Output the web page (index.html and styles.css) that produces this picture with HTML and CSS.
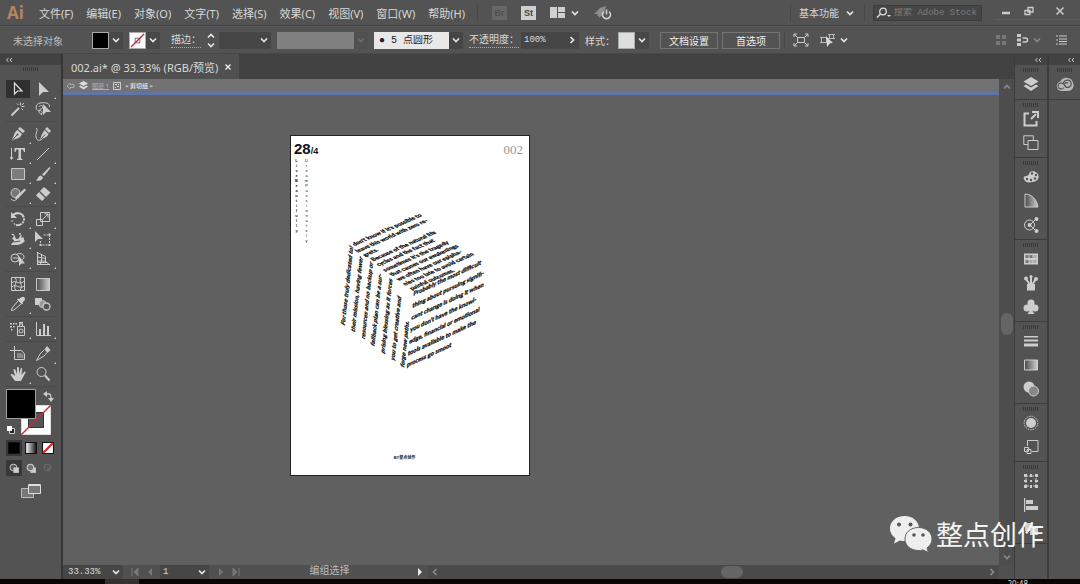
FILE: index.html
```html
<!DOCTYPE html>
<html lang="zh-CN">
<head>
<meta charset="utf-8">
<meta name="viewport" content="width=device-width, initial-scale=1">
<title>002.ai</title>
<link rel="stylesheet" href="styles.css">
</head>
<body>
<svg class="defs" aria-hidden="true">
  <defs>
    <symbol id="chev" viewBox="0 0 10 10"><path d="M2 3.5l3 3 3-3" fill="none" stroke="currentColor" stroke-width="1.7"/></symbol>
    <symbol id="collapse" viewBox="0 0 8 8"><path d="M3.5 2L1.500 4l2 2M7 2L5 4l2 2" fill="none" stroke="currentColor"/></symbol>
    <symbol id="grip" viewBox="0 0 16 4"><path d="M0 2h16" stroke="#3a3a3a" stroke-width="4" stroke-dasharray="1 1"/></symbol>
    <linearGradient id="fade"><stop offset="0" stop-color="#4a4a4a"/><stop offset="1" stop-color="#d0d0d0"/></linearGradient>
    <linearGradient id="fadeOut"><stop offset="0" stop-color="#fff"/><stop offset="1" stop-color="#111"/></linearGradient>
  </defs>
</svg>

<header class="menubar">
  <span class="logo">Ai</span>
  <nav class="menus">
    <button>文件(F)</button><button>编辑(E)</button><button>对象(O)</button><button>文字(T)</button><button>选择(S)</button><button>效果(C)</button><button>视图(V)</button><button>窗口(W)</button><button>帮助(H)</button>
  </nav>
  <i class="rule"></i>
  <div class="apps">
    <button class="app app-off">Br</button>
    <button class="app">St</button>
    <button class="layout-pick" aria-label="排列文档">
      <svg width="15" height="11" viewBox="0 0 15 11"><path d="M0 0h7v11H0zM8 0h7v5H8zM8 6h7v5H8z" fill="#cfcfcf"/></svg>
      <svg class="chev"><use href="#chev"/></svg>
    </button>
    <button class="rocket" aria-label="GPU 预览">
      <svg width="18" height="16" viewBox="0 0 18 16"><path d="M0 9L6 3l6-2-1 4-5 6-2 0-1-2z" fill="#8c8c8c"/><path d="M5 12l5-6" stroke="#8c8c8c" stroke-width="2"/><path d="M10 6.500a4 4 0 1 0 5 0M12.500 4.500v5" fill="none" stroke="#cfcfcf" stroke-width="1.600"/></svg>
    </button>
  </div>
  <div class="right-tools">
    <i class="rule"></i>
    <button class="workspace">基本功能<svg class="chev"><use href="#chev"/></svg></button>
    <i class="rule"></i>
    <label class="search">
      <svg width="16" height="12" viewBox="0 0 16 12"><circle cx="7" cy="4.500" r="3.300" fill="none" stroke="#ddd" stroke-width="1.300"/><path d="M4.500 7L1 10.500" stroke="#ddd" stroke-width="1.500"/><path d="M11 8h4l-2 2z" fill="#ddd"/></svg>
      <input type="text" placeholder="搜索 Adobe Stock" aria-label="搜索 Adobe Stock">
    </label>
    <div class="window-buttons">
      <button aria-label="最小化"><svg width="10" height="10"><path d="M1 7h8" stroke="#ccc" stroke-width="2.500"/></svg></button>
      <button aria-label="还原"><svg width="10" height="10"><path d="M4 1.500h5v4.500H4zM1 4.500h5v4H1z" fill="none" stroke="#ccc" stroke-width="1.300"/></svg></button>
      <button class="close" aria-label="关闭"><svg width="10" height="10"><path d="M1.500 1.500l7 7m0-7l-7 7" stroke="#ccc" stroke-width="1.500"/></svg></button>
    </div>
  </div>
</header>

<section class="controls" aria-label="控制">
  <span class="selection">未选择对象</span>
  <button class="swatch-pick" aria-label="填色"><i class="swatch black"></i><span class="drop"><svg class="chev"><use href="#chev"/></svg></span></button>
  <button class="swatch-pick" aria-label="描边颜色"><svg class="swatch" viewBox="0 0 16 16"><path d="M0 0h16v16H0z" fill="#fff"/><path d="M5.500 5.500h5v5h-5z" fill="none" stroke="#666"/><path d="M1 15L15 1" stroke="#c8283c" stroke-width="1.400"/></svg><span class="drop"><svg class="chev"><use href="#chev"/></svg></span></button>
  <label class="caption dotted stroke-caption" for="weight">描边：</label>
  <div class="stepper">
    <button aria-label="增加"><svg class="chev up"><use href="#chev"/></svg></button>
    <button aria-label="减少"><svg class="chev"><use href="#chev"/></svg></button>
  </div>
  <span class="pick weight"><select id="weight"><option></option></select><svg class="chev"><use href="#chev"/></svg></span>
  <span class="pick profile"><select disabled aria-label="变量宽度配置文件"><option></option></select><svg class="chev"><use href="#chev"/></svg></span>
  <span class="pick brush"><select aria-label="画笔定义"><option>● 5 点圆形</option></select><svg class="chev"><use href="#chev"/></svg></span>
  <label class="caption dotted" for="opacity">不透明度：</label>
  <span class="pick opacity"><input id="opacity" value="100%"><svg class="chev side"><use href="#chev"/></svg></span>
  <span class="caption">样式：</span>
  <button class="swatch-pick style-pick" aria-label="图形样式"><i class="swatch pale"></i><span class="drop"><svg class="chev"><use href="#chev"/></svg></span></button>
  <button class="boxed">文档设置</button>
  <button class="boxed">首选项</button>
  <i class="rule"></i>
  <button class="plain" aria-label="隔离选中的对象"><svg width="16" height="14" viewBox="0 0 16 14"><path d="M4.500 4.500h7v5h-7z" fill="none" stroke="#ccc"/><path d="M1 4V1h3M12 1h3v3M15 10v3h-3M4 13H1v-3M1 1l3.500 3.500M15 1l-3.500 3.500M15 13l-3.500-3.500M1 13l3.500-3.500" fill="none" stroke="#ccc"/></svg></button>
  <button class="plain pair" aria-label="选择类似的对象"><svg width="16" height="14" viewBox="0 0 16 14"><path d="M1.500 4.500h5v5h-5zM9.500 1.500h4v4h-4zM0 4.500h2M0 9.500h2M8 1.500h7M8 5.500h7" fill="none" stroke="#bbb"/><path d="M6 3l7 7-3 .3L7 14z" fill="#d8d8d8"/></svg><svg class="chev"><use href="#chev"/></svg></button>
  <div class="controls-end">
    <button class="plain" aria-label="网格"><svg width="10" height="10"><path d="M0 0h4v4H0zM6 0h4v4H6zM0 6h4v4H0zM6 6h4v4H6z" fill="#777"/></svg></button>
    <button class="plain pair" aria-label="对齐像素"><svg width="12" height="12"><path d="M0 0h4v3H0zM0 4.500h4v3H0zM0 9h4v3H0z" fill="#ccc"/><path d="M5.500 4h3a2 2 0 0 1 0 4h-3" fill="none" stroke="#ccc" stroke-width="1.500"/></svg><svg class="chev faint"><use href="#chev"/></svg></button>
    <button class="plain" aria-label="面板菜单"><svg width="11" height="10"><path d="M0 1h2M0 5h2M0 9h2M3 1h8M3 4h8M3 6.500h8M3 9h8" stroke="#ccc"/></svg></button>
  </div>
</section>

<main class="work">
  <aside class="tools">
    <div class="panel-head left"><svg class="collapse"><use href="#collapse"/></svg></div>
    <svg class="grip"><use href="#grip"/></svg>
    <div class="tool-group">
      <button class="tool on" aria-label="选择"><svg viewBox="0 0 16 16"><path d="M4.500 2v11l3-3h4.500z" fill="none" stroke="#ddd" stroke-width="1.200"/></svg></button>
      <button class="tool more" aria-label="直接选择"><svg viewBox="0 0 16 16"><path d="M4 1v14l4-4h6z"/></svg></button>
      <button class="tool" aria-label="魔棒"><svg viewBox="0 0 16 16"><path class="l2" d="M1.500 14.500L9 7"/><path class="l" d="M10.500 1.500v3M14.500 5.500h-3M12 4l2-2M7 2.500l1.500 1.500M13 9l-1.500-1.500"/></svg></button>
      <button class="tool" aria-label="套索"><svg viewBox="0 0 16 16"><path class="l" d="M4 10C0 9 0 3 5 2s10 0 9.500 4M4 6c1-2 4-2 4 0s-4 2-4 4 1 3 3 3M5 9c2 1 3 3 1 5"/><path d="M8 3v11l3-3H16z"/></svg></button>
    </div>
    <div class="tool-group">
      <button class="tool more" aria-label="钢笔"><svg viewBox="0 0 16 16"><path d="M10 1l5 4-2 2-5-4zM7.500 4l4.500 4c-1 3-4 5-8 5.500L1.500 15 4 9c.5-2 1.500-4 3.500-5z"/><path d="M2 14.500L7 9" stroke="#535353"/><circle cx="7.500" cy="8.500" r="1" fill="#535353"/></svg></button>
      <button class="tool" aria-label="曲率"><svg viewBox="0 0 16 16"><path d="M12 1l4 4-2 2-4-4zM9.500 4l4 4c-1 3-4 4-7 5L5 14l1.500-5z"/><path d="M6 13l4-4.500" stroke="#535353"/><path class="l" d="M1 2c3 2-1 5 0 9s4 4 6 2"/></svg></button>
      <button class="tool more" aria-label="文字"><svg viewBox="0 0 16 16"><path class="l" d="M1.500 2v11M0 11l1.500 2.500L3 11"/><path d="M4.500 2H15v4h-1l-1-2.500h-2v9l1.500.5v1H7v-1l1.500-.5v-9h-2L5.500 6h-1z"/></svg></button>
      <button class="tool more" aria-label="直线段"><svg viewBox="0 0 16 16"><path class="l" d="M2 14L14 2"/></svg></button>
      <button class="tool more" aria-label="矩形"><svg viewBox="0 0 16 16"><path d="M1.500 2.500h13v11h-13z" fill="#7c7c7c" stroke="#c8c8c8"/></svg></button>
      <button class="tool more" aria-label="画笔"><svg viewBox="0 0 16 16"><path d="M14.500 1L15.500 2 9 10 7 8.500zM6 9.500l2 2C7 15 4 15 1 14.500c2-1 2-5 5-5z"/></svg></button>
      <button class="tool more" aria-label="Shaper"><svg viewBox="0 0 16 16"><circle cx="5.500" cy="7" r="4.500" fill="#777" stroke="#c8c8c8"/><path d="M14.500 2.500l1.500 1.500-8 8.500-3 1 1-3z"/><path class="l" d="M1 13c2 2 4 2 6 0"/></svg></button>
      <button class="tool more" aria-label="橡皮擦"><svg viewBox="0 0 16 16"><path d="M9 1l6.500 5.500-4.500 4.500-6-6zM4 6l6 6-3 3L1 9.500z"/></svg></button>
    </div>
    <div class="tool-group">
      <button class="tool more" aria-label="旋转"><svg viewBox="0 0 16 16"><path class="l2" d="M3 4c5-4 11-1 11 4 0 4-4 7-8 6" stroke-dasharray="13 1 2 1 2 1"/><path d="M1 1v6h6z"/><path class="l" d="M2 9v2M4 12l1 2"/></svg></button>
      <button class="tool more" aria-label="缩放"><svg viewBox="0 0 16 16"><path class="l" d="M5.500 1.500h9v9h-9zM1.500 8.500h6v6h-6z"/><path class="l" d="M8 8l5-5M9.500 3H13v3.500"/></svg></button>
      <button class="tool more" aria-label="宽度"><svg viewBox="0 0 16 16"><path d="M1 3c5-2 3 6 7 5 2-1 1-4 4-4l-1 3c3-2 3 0 3 2l1 1c-5 5-9 4-14 4l1-2c2-1 2-1 2-3L2 8l2-3z"/><path d="M4 11l6-1" stroke="#535353"/><circle cx="10" cy="3" r="1"/></svg></button>
      <button class="tool" aria-label="自由变换"><svg viewBox="0 0 16 16"><path d="M0 0v11l3-3h5z"/><path class="l" d="M5.500 10v4h9v-10h-6" stroke-dasharray="2 1"/><path d="M13.500 2.500h2v2h-2zM13.500 13h2v2h-2zM4.500 13h2v2h-2z"/></svg></button>
      <button class="tool more" aria-label="形状生成器"><svg viewBox="0 0 16 16"><circle class="l" cx="5" cy="7" r="4"/><path class="l" d="M6 4c3-3 8-1 8 2s-4 4-7 4M3 7h6" /><path d="M9 5v10l2.500-2.500H15z"/></svg></button>
      <button class="tool more" aria-label="透视网格"><svg viewBox="0 0 16 16"><path class="l" d="M2.500 1v13M2.500 1.500l8 4v5M6.500 3.500v8M2.500 6l8 1.500M2.500 10h8M2 13.500h13M2 11.500l10 0M10 10l5 4M7 11l-3 3"/></svg></button>
    </div>
    <div class="tool-group">
      <button class="tool" aria-label="网格"><svg viewBox="0 0 16 16"><path class="l" d="M1.500 1.500h13v13h-13zM1.500 7c4-4 7 3 13-2M1.500 11c5-4 8 3 13-1M5 1.500c4 4-3 8 1 13M11 1.500c-3 4 3 8-1 13"/></svg></button>
      <button class="tool" aria-label="渐变"><svg viewBox="0 0 16 16"><path d="M1.500 2.500h13v12h-13z" fill="url(#fade)" stroke="#c8c8c8"/></svg></button>
      <button class="tool more" aria-label="吸管"><svg viewBox="0 0 16 16"><path d="M11 1.500c3-2 5 1 3.500 3l-2 2 .5 1-1 1-5-5 1-1 1 .5z"/><path class="l" d="M8 5l-6 7-.5 2.500L4 14l7-6"/></svg></button>
      <button class="tool" aria-label="混合"><svg viewBox="0 0 16 16"><path d="M0 2h7v7H0z"/><circle cx="7.500" cy="8" r="3.500" fill="#999" stroke="#c8c8c8"/><circle cx="11.500" cy="10.500" r="3.500" fill="#535353" stroke="#c8c8c8" stroke-width="1.300"/></svg></button>
    </div>
    <div class="tool-group">
      <button class="tool more" aria-label="符号喷枪"><svg viewBox="0 0 16 16"><path class="l" d="M7.500 5.500h7v9h-7zM9.500 5V3h3v2"/><circle class="l" cx="11" cy="10" r="2"/><path d="M9 1h4v1.500H9zM0 2h2v1.500H0zM3 2h1.500v1.500H3zM5.500 2H7v1.500H5.500zM0 5h2v1.500H0zM3 5h1.500v1.500H3zM1 8h1.500v1.500H1z"/></svg></button>
      <button class="tool more" aria-label="柱形图"><svg viewBox="0 0 16 16"><path class="l" d="M1.500 1v13.500H16"/><path d="M4 8h2v6H4zM8 3h2v11H8zM12 5h2v9h-2z"/></svg></button>
    </div>
    <div class="tool-group">
      <button class="tool" aria-label="画板"><svg viewBox="0 0 16 16"><path class="l" d="M4.500 0v5M0 4.500h6M4.500 4.500v9h10V8l-3-3.500z"/><path d="M7 7h4l2.500 2v3H7z" fill="#888"/></svg></button>
      <button class="tool more" aria-label="切片"><svg viewBox="0 0 16 16"><path d="M12 0l3.500 4-3 3-3-3.500z"/><path class="l" d="M9 4L5 8 1.500 14.500 9 10l3-3.500"/></svg></button>
      <button class="tool more" aria-label="抓手"><svg viewBox="0 0 16 16"><path d="M5 15L1 9.500c-1-1.500 1-2 2-1L5 10 3.500 4c0-1.500 1.500-1.500 2 0L7 8V2c0-1.500 2-1.500 2 0v6l1.500-5c.5-1.500 2-1 1.700.5L11.500 9 14 6c1-1 2 0 1.300 1L11 15z"/></svg></button>
      <button class="tool" aria-label="缩放显示"><svg viewBox="0 0 16 16"><circle class="l" cx="6.500" cy="6" r="4.500"/><path class="l2" d="M10 9.500l4.500 5"/></svg></button>
    </div>
    <svg class="fill-stroke" viewBox="0 0 50 50" role="img" aria-label="填色和描边">
      <path d="M15.500 16.500h29v29h-29z" fill="#fff" stroke="#ddd"/><path d="M22.500 23.500h15v15h-15z" fill="#555" stroke="#333"/><path d="M15 46L45 16" stroke="#c8283c" stroke-width="1.500"/>
      <path d="M.500 .500h29v29H.500z" fill="#000" stroke="#a0a0a0"/>
      <path d="M39 5h4q2 0 2 5" fill="none" stroke="#ccc" stroke-width="1.300"/><path d="M37 5l4-3v6zM42 9h6l-3 4z" fill="#ccc"/>
      <path d="M3.500 39.500h5v5h-5z" fill="#222" stroke="#ccc"/><path d="M1 37h5v5H1z" fill="#fff"/>
    </svg>
    <div class="modes">
      <button class="mode on" aria-label="颜色"><svg viewBox="0 0 11 11"><path d="M.500 .500h10v10H.500z" stroke="#111"/></svg></button>
      <button class="mode" aria-label="渐变"><svg viewBox="0 0 11 11"><path d="M.500 .500h10v10H.500z" fill="url(#fadeOut)" stroke="#111"/></svg></button>
      <button class="mode" aria-label="无"><svg viewBox="0 0 11 11"><path d="M.500 .500h10v10H.500z" fill="#fff" stroke="#111"/><path d="M1 10L10 1" stroke="#d22" stroke-width="2"/></svg></button>
    </div>
    <div class="modes">
      <button class="mode on" aria-label="正常绘图"><svg viewBox="0 0 11 11"><circle cx="5" cy="5" r="3" fill="#555" stroke="#bbb"/><path d="M5 5h5v5H5z" fill="#ccc"/></svg></button>
      <button class="mode" aria-label="背面绘图"><svg viewBox="0 0 11 11"><path d="M5 5h5v5H5z" fill="#ccc"/><circle cx="5" cy="5" r="3" fill="#777" stroke="#ccc"/></svg></button>
      <button class="mode" aria-label="内部绘图"><svg viewBox="0 0 11 11"><circle cx="5" cy="5" r="3" fill="none" stroke="#6c6c6c"/><path d="M5 5h2v2H5z" fill="#6c6c6c"/></svg></button>
    </div>
    <button class="screen-mode" aria-label="更改屏幕模式"><svg width="20" height="14"><path d="M.500 4.500h12v9H.500z" fill="#777" stroke="#bbb"/><path d="M7.500 .500h12v9h-12z" fill="#777" stroke="#ddd"/><path d="M8 1.500h11" stroke="#ddd"/></svg></button>
  </aside>

  <section class="document">
    <div class="tabs">
      <div class="tab"><span>002.ai* @ 33.33% (RGB/预览)</span><button aria-label="关闭文档"><svg width="6" height="6"><path d="M.500 .500l5 5m0-5l-5 5" stroke="#eee" stroke-width="1.300"/></svg></button></div>
    </div>
    <div class="view">
      <div class="stage">
        <nav class="crumbs">
          <svg width="9" height="8"><path d="M4 1L1 4l3 3V5.500h4v-3H4z" fill="none" stroke="#aaa"/></svg>
          <svg width="9" height="9"><path d="M4.500 0L9 2.500 4.500 5 0 2.500zM0 5.500l1.500-1 3 1.700 3-1.700 1.500 1L4.500 8.500z" fill="#ddd"/></svg>
          <a href="#">图层 1</a>
          <svg width="8" height="8"><path d="M.500 .500h7v7h-7z" fill="none" stroke="#ccc"/><path d="M2 2h2v1H2zM4 4h2v1H4zM2 5h1v1H2zM5 2h1v1H5z" fill="#ddd"/></svg>
          <b>&lt; 剪切组 &gt;</b>
        </nav>
        <div class="canvas">
          <article class="artboard">
            <header><h1>28<small>/4</small></h1><span class="number">002</span></header>
            <div class="motto"><strong><span>Live</span> <span>Beautifully</span></strong><p><span>Dream</span> <span>Passionately</span></p></div>
            <svg class="cube" viewBox="0 0 480 540">
              <g class="top-face">
                <text transform="matrix(.914 -.406 .8 .6 74 138)">don't know if it's possible to</text>
                <text transform="matrix(.914 -.406 .8 .6 84 158)">leave this world with zero re-</text>
                <text transform="matrix(.914 -.406 .8 .6 106 170)">grets.</text>
                <text transform="matrix(.914 -.406 .8 .6 130 184)">Because of the natural life</text>
                <text transform="matrix(.914 -.406 .8 .6 146 199)">cycles and the fact that</text>
                <text transform="matrix(.914 -.406 .8 .6 166 215)">sometimes it's the tragedy</text>
                <text transform="matrix(.914 -.406 .8 .6 186 229)">that causes our awakenings</text>
                <text transform="matrix(.914 -.406 .8 .6 206 243)">we often have our epipha-</text>
                <text transform="matrix(.914 -.406 .8 .6 226 257)">nies too late to avoid certain</text>
                <text transform="matrix(.914 -.406 .8 .6 246 271)">painful outcomes.</text>
              </g>
              <g class="side-face">
                <text transform="matrix(.107 -.994 .82 .57 44 378)">For those truly dedicated to!</text>
                <text transform="matrix(.107 -.994 .82 .57 74 398)">their mission, having fewer</text>
                <text transform="matrix(.107 -.994 .82 .57 104 419)">resources and no backup or</text>
                <text transform="matrix(.107 -.994 .82 .57 133 440)">fallback plan can be a sur-</text>
                <text transform="matrix(.107 -.994 .82 .57 163 462)">prising blessing as it forces</text>
                <text transform="matrix(.107 -.994 .82 .57 193 484)">you to get creative and</text>
                <text transform="matrix(.107 -.994 .82 .57 222 504)">forge new paths.</text>
              </g>
              <g class="side-face">
                <text transform="matrix(.907 -.421 -.09 .995 250 288)">Probably the most difficult</text>
                <text transform="matrix(.907 -.421 -.09 .995 247 324)">thing about pursuing signifi-</text>
                <text transform="matrix(.907 -.421 -.09 .995 244 360)">cant change is doing it when</text>
                <text transform="matrix(.907 -.421 -.09 .995 240 396)">you don't have the knowl-</text>
                <text transform="matrix(.907 -.421 -.09 .995 237 432)">edge, financial or emotional</text>
                <text transform="matrix(.907 -.421 -.09 .995 233 467)">tools available to make the</text>
                <text transform="matrix(.907 -.421 -.09 .995 230 502)">process go smoot</text>
              </g>
            </svg>
            <footer>BY整点创作</footer>
          </article>
        </div>
      </div>
      <div class="vscroll"><svg class="chev up faint"><use href="#chev"/></svg><i class="before"></i><i class="thumb"></i><i class="after"></i><svg class="chev faint"><use href="#chev"/></svg></div>
    </div>
    <footer class="status">
      <span class="pick zoom"><select aria-label="缩放级别"><option>33.33%</option></select><svg class="chev"><use href="#chev"/></svg></span>
      <div class="pager">
        <button aria-label="首项"><svg width="8" height="8"><path d="M1 0v8M7 0v8L3 4z" fill="#777" stroke="#777"/></svg></button>
        <button aria-label="上一项"><svg width="8" height="8"><path d="M6 0v8L2 4z" fill="#777"/></svg></button>
      </div>
      <span class="pick page"><select aria-label="画板导航"><option>1</option></select><svg class="chev"><use href="#chev"/></svg></span>
      <div class="pager">
        <button aria-label="下一项"><svg width="8" height="8"><path d="M2 0v8l4-4z" fill="#777"/></svg></button>
        <button aria-label="末项"><svg width="8" height="8"><path d="M7 0v8M1 0v8l4-4z" fill="#777" stroke="#777"/></svg></button>
      </div>
      <span class="state">编组选择</span>
      <button class="play" aria-label="状态栏菜单"><svg width="6" height="8"><path d="M1 0v8l4-4z" fill="#eee"/></svg></button>
      <div class="hscroll"><svg class="chev back faint"><use href="#chev"/></svg><i class="before"></i><i class="thumb"></i><i class="after"></i><svg class="chev side faint"><use href="#chev"/></svg></div>
      <i class="corner"></i>
    </footer>
  </section>

  <aside class="dock">
    <div class="panel-head"><svg class="collapse"><use href="#collapse"/></svg></div>
    <div class="dock-group first"><svg class="grip"><use href="#grip"/></svg>
      <button aria-label="图层"><svg viewBox="0 0 16 16"><path d="M8 1l7.500 4.500L8 10 .500 5.500zM.500 10L3 8.500l5 3 5-3 2.500 1.500L8 15z"/></svg></button>
    </div>
    <div class="dock-group"><svg class="grip"><use href="#grip"/></svg>
      <button aria-label="资源导出"><svg viewBox="0 0 16 16"><path class="l2" d="M6 2.500H1.500v12h12V10M8 8l5-5"/><path d="M9 0h7v7h-2V2H9z"/></svg></button>
      <button aria-label="画板"><svg viewBox="0 0 16 16"><path class="l" d="M5 9.500H.800V.800h9.500V5M5 5.500h10v9H5z"/></svg></button>
    </div>
    <div class="dock-group"><svg class="grip"><use href="#grip"/></svg>
      <button aria-label="颜色"><svg viewBox="0 0 16 16"><path d="M1 10c-2-4 5-2 5-5s5-4 8-1 2 8-4 9-8 0-9-3z"/><g fill="#535353"><circle cx="9" cy="4.500" r="1.200"/><circle cx="13" cy="6" r="1.200"/><circle cx="12" cy="9.500" r="1.200"/><circle cx="8" cy="11" r="1.200"/><circle cx="4" cy="10" r="1.200"/></g></svg></button>
      <button aria-label="颜色参考"><svg viewBox="0 0 16 16"><path d="M2 1c7 0 12 6 13 13H2z" fill="url(#fade)" stroke="#ccc"/></svg></button>
      <button aria-label="颜色主题"><svg viewBox="0 0 16 16"><circle class="l" cx="6.500" cy="8" r="5" stroke-width="1.500"/><circle cx="6.500" cy="8" r="2"/><path class="l" d="M7 8l6-6M7 8l6 6"/><circle cx="13.500" cy="2" r="2"/><circle cx="13.500" cy="14" r="2"/></svg></button>
    </div>
    <div class="dock-group"><svg class="grip"><use href="#grip"/></svg>
      <button aria-label="色板"><svg viewBox="0 0 16 16"><path d="M1 2.500h14v11H1z"/><path d="M2.500 4h3v3h-3zM6.500 4h3v3h-3zM2.500 9h3v3h-3z" fill="#777"/><path d="M10.500 4h3v3h-3zM6.500 9h3v3h-3zM10.500 9h3v3h-3z" fill="#aaa"/></svg></button>
      <button aria-label="画笔"><svg viewBox="0 0 16 16"><path d="M4 9h8v6.500H4z"/><path class="l2" d="M6.500 9L3 4M8 9V2M9.500 9L13 4"/><circle cx="3" cy="3.500" r="2"/><circle cx="8" cy="1.500" r="1.500"/><circle cx="13" cy="4" r="2"/></svg></button>
      <button aria-label="符号"><svg viewBox="0 0 16 16"><circle cx="8" cy="4" r="3.500"/><circle cx="4" cy="9" r="3.500"/><circle cx="12" cy="9" r="3.500"/><path d="M7 6h2l.5 6 2 3h-7l2-3z"/></svg></button>
    </div>
    <div class="dock-group"><svg class="grip"><use href="#grip"/></svg>
      <button aria-label="描边"><svg viewBox="0 0 16 16"><path d="M1 3h14v1.500H1zM1 6.500h14v2H1zM1 10.500h14v3H1z"/></svg></button>
      <button aria-label="渐变面板"><svg viewBox="0 0 16 16"><path d="M1.500 3h13v10h-13z" fill="url(#fade)" stroke="#ccc"/></svg></button>
      <button aria-label="透明度"><svg viewBox="0 0 16 16"><circle cx="6" cy="6" r="5.500"/><circle cx="10.500" cy="10" r="5" fill="#888" stroke="#d0d0d0"/></svg></button>
    </div>
    <div class="dock-group"><svg class="grip"><use href="#grip"/></svg>
      <button aria-label="外观"><svg viewBox="0 0 16 16"><circle cx="8" cy="8" r="5"/><circle cx="8" cy="8" r="6.800" fill="none" stroke="#ccc" stroke-dasharray="1.500 1"/></svg></button>
      <button aria-label="图形样式面板"><svg viewBox="0 0 16 16"><path class="l" d="M4.500 7V1.500h10.500v11H9"/><path class="l" d="M1.500 8.500h4v4h-4zM4 10.500h4v4H4z"/></svg></button>
    </div>
    <div class="dock-group"><svg class="grip"><use href="#grip"/></svg>
      <button aria-label="变换"><svg viewBox="0 0 16 16"><path class="l" d="M3 3h10v10H3z" stroke-dasharray="2 1"/><path d="M1 1h3v3H1zM12 1h3v3h-3zM1 12h3v3H1zM12 12h3v3h-3zM7 1h2v3H7zM7 12h2v3H7zM1 7h3v2H1zM12 7h3v2h-3zM7 7h2v2H7z"/></svg></button>
      <button aria-label="对齐"><svg viewBox="0 0 16 16"><path d="M1 1h1.200v14H1zM3 3h7v4H3zM3 9h12v4H3z"/></svg></button>
      <button aria-label="路径查找器"><svg viewBox="0 0 16 16"><path d="M2 2h8v4h5v8H7v-4H2z"/></svg></button>
    </div>
  </aside>
  <aside class="dock">
    <div class="panel-head"><svg class="collapse"><use href="#collapse"/></svg></div>
    <div class="dock-group first"><svg class="grip"><use href="#grip"/></svg>
      <button class="wide" aria-label="库"><svg viewBox="0 0 18 16"><path d="M5.500 15a5 5 0 0 1-1-9.800C6 2 9 1 12 2c3 .5 4.500 2.500 5 5 2 4-1 8-5 8z" fill="#b8b8b8"/><path d="M8 11.500c-2 2.500-6 1.500-6-1.500s4-4 6-1.500l2.500 3M7 8c1-5 7-5 8-1.500 1 4-3 6.500-6 3.500-2-2 1-4.500 3-2.500" fill="none" stroke="#555" stroke-width="1.200"/></svg></button>
    </div>
  </aside>
</main>

<div class="taskbar"><i class="running"></i><time>20:48</time></div>

<div class="watermark">
  <svg width="44" height="38" viewBox="0 0 44 38"><path d="M15.500 1C7 1 1 6.500 1 13.500c0 4 2 7.500 5.500 9.800L5 28.500l6-3c1.500.4 3 .5 4.500.5C24 26 30 20.500 30 13.500S24 1 15.500 1z" fill="#eee"/><path d="M29.500 12.500c-8 0-13.500 5-13.500 11.500S21.500 35.500 29.500 35.500c1.500 0 3-.2 4.500-.6l5.500 2.600-1.500-4.600c3-2 5-5 5-8.900 0-6.500-5.500-11.500-13.500-11.500z" fill="#eee" stroke="#606060"/><g fill="#555"><circle cx="10" cy="9.500" r="2"/><circle cx="21.500" cy="9.500" r="2"/><circle cx="25" cy="20" r="1.800"/><circle cx="34" cy="20" r="1.800"/></g></svg>
  <span>整点创作</span>
</div>
</body>
</html>
```
FILE: styles.css
```css
* { box-sizing: border-box; }
body {
  margin: 0;
  min-height: 100vh;
  display: flex;
  flex-direction: column;
  position: relative;
  background: #535353;
  color: #d8d8d8;
  font-family: "Noto Sans", "Noto Sans CJK SC", sans-serif;
  font-size: 11px;
}
button, input, select {
  margin: 0;
  padding: 0;
  border: 0;
  background: none;
  color: inherit;
  font: inherit;
  border-radius: 0;
}
select { appearance: none; opacity: 1; }
button {
  display: flex;
  align-items: center;
  justify-content: center;
  white-space: nowrap;
}
svg { display: block; flex: none; }
.defs { position: absolute; width: 0; height: 0; }
.chev { width: 10px; height: 10px; color: #e4e4e4; }
.up { transform: rotate(180deg); }
.side { transform: rotate(-90deg); }
.back { transform: rotate(90deg); }
.faint { color: #8a8a8a; }
.rule { width: 1px; height: 18px; background: #484848; }

/* Menu bar */
.menubar {
  display: flex;
  align-items: center;
  height: 26px;
  padding-left: 7px;
  border-bottom: 1px solid #404040;
}
.logo {
  width: 32px;
  color: #b58463;
  font: bold 17px/24px "Open Sans", sans-serif;
}
.menus { display: flex; gap: 13px; margin-right: 12px; }
.apps { display: flex; align-items: center; margin-left: 14px; gap: 14px; }
.app {
  width: 15px;
  height: 14px;
  background: #cfcfcf;
  color: #444;
  font: bold 9px "Liberation Sans", sans-serif;
}
.app-off { background: #676767; color: #4e4e4e; }
.layout-pick { gap: 5px; }
.right-tools { display: flex; align-items: center; margin-left: auto; }
.workspace { gap: 6px; margin: 0 9px 0 8px; font-size: 10px; }
.search {
  display: flex;
  align-items: center;
  gap: 2px;
  width: 109px;
  height: 16px;
  margin: 0 12px 0 8px;
  padding-left: 2px;
  background: #464646;
  border: 1px solid #3c3c3c;
}
.search input {
  flex: 1;
  min-width: 0;
  font: 9px "Liberation Mono", "Noto Sans CJK SC", monospace;
  outline: 0;
}
.search input::placeholder { color: #7c7c7c; opacity: 1; }
.window-buttons { display: flex; height: 16px; align-self: flex-start; border-bottom: 1px solid #5c5c5c; }
.window-buttons button { width: 23px; }
.window-buttons .close { width: 40px; }

/* Control bar */
.controls {
  display: flex;
  align-items: center;
  height: 28px;
  padding-left: 13px;
  border-top: 1px solid #5a5a5a;
  border-bottom: 1px solid #484848;
  font-family: "Liberation Mono", "Noto Sans CJK SC", monospace;
  font-size: 10px;
}
.selection { width: 79px; color: #bdbdbd; white-space: nowrap; }
.swatch-pick { margin-right: 6px; }
.swatch { width: 17px; height: 17px; border: 1px solid #aaa; }
.black { background: #000; }
.pale { background: #dedede; }
.drop {
  display: flex;
  align-items: center;
  justify-content: center;
  width: 14px;
  height: 17px;
  background: #484848;
}
.caption { white-space: nowrap; }
.dotted { padding-top: 2px; border-bottom: 1px dotted #aaa; line-height: 12px; }
.stroke-caption { margin-left: 5px; }
.stepper { width: 12px; margin: 0 2px 0 4px; }
.stepper button { width: 12px; height: 9px; }
.pick {
  display: flex;
  align-items: center;
  height: 17px;
  margin-right: 6px;
  padding-right: 2px;
  background: #464646;
}
.pick select, .pick input { flex: 1; min-width: 0; height: 100%; margin-right: 2px; }
.weight { width: 52px; }
.profile { width: 91px; background: #505050; }
.profile select { background: #808080; }
.profile .chev { color: #6c6c6c; }
.brush { width: 89px; }
.brush select { padding-left: 5px; background: #e8e8e8; color: #222; }
.opacity { width: 58px; margin-left: 2px; font-size: 9px; }
.opacity input { padding-left: 3px; }
.style-pick { margin: 0 11px 0 3px; }
.boxed {
  width: 58px;
  height: 17px;
  margin-right: 4px;
  border: 1px solid #747474;
  color: #eee;
}
.plain { margin-left: 8px; }
.pair { margin-left: 11px; gap: 3px; }
.controls-end { display: flex; align-items: center; margin: 0 13px 0 auto; }
.controls-end .plain:last-child { margin-left: 14px; }

/* Work area */
.work { flex: 1; display: flex; }
.panel-head {
  display: flex;
  align-items: center;
  justify-content: flex-end;
  align-self: stretch;
  height: 11px;
  padding: 0 5px;
  background: #424242;
}
.panel-head.left { justify-content: flex-start; }
.collapse { width: 8px; height: 8px; color: #ccc; }
.grip { width: 16px; height: 4px; }

.tools {
  display: flex;
  flex-direction: column;
  align-items: center;
  width: 63px;
  border-right: 2px solid #363636;
}
.tools > .grip { margin: 2px 0 8px; }
.tool-group {
  display: grid;
  grid-template-columns: 25px 25px;
  grid-auto-rows: 20px;
  padding-bottom: 2px;
  margin-bottom: 2px;
  border-bottom: 1px solid #4a4a4a;
}
.tool { position: relative; }
.tool svg, .dock-group button svg { width: 16px; height: 16px; fill: #cdcdcd; }
.tool.on { width: 24px; height: 18px; margin-top: 1px; background: #303030; }
.tool .l, .tool .l2, .dock .l, .dock .l2 { fill: none; stroke: #cdcdcd; stroke-width: 1; }
.tool .l2, .dock .l2 { stroke-width: 2; }
.more::after {
  content: "";
  position: absolute;
  right: 0;
  bottom: 0;
  border: 1px solid #ccc;
  border-top-color: transparent;
  border-left-color: transparent;
}
.fill-stroke { width: 50px; height: 50px; margin-bottom: 1px; }
.modes { display: flex; gap: 1px; margin-bottom: 4px; }
.mode { width: 16px; height: 16px; }
.mode.on { background: #383838; }
.mode svg { width: 12px; height: 12px; }
.screen-mode { margin-top: 4px; }

.document { flex: 1; min-width: 0; display: flex; flex-direction: column; }
.tabs { display: flex; height: 25px; background: #424242; }
.tab {
  display: flex;
  align-items: center;
  gap: 7px;
  padding: 0 8px;
  background: #505050;
  font-size: 11px;
  white-space: nowrap;
}
.view { flex: 1; display: flex; }
.stage { flex: 1; display: flex; flex-direction: column; background: #606060; }
.crumbs {
  display: flex;
  align-items: center;
  gap: 4px;
  height: 16px;
  padding-left: 3px;
  background: #727272;
  border-bottom: 3px solid #6076a8;
  color: #b8b8b8;
  font-size: 6px;
  line-height: 12px;
}
.crumbs a { color: #b0b0b0; }
.crumbs b { color: #ddd; }
.canvas { flex: 1; padding: 40px 227px; }

/* Poster */
.artboard {
  position: relative;
  display: flex;
  flex-direction: column;
  width: 240px;
  height: 341px;
  padding: 4px 6px 14px 3px;
  background: #fff;
  border: 1px solid #222;
  color: #111;
  font-family: "Liberation Sans", "Noto Sans CJK SC", sans-serif;
}
.artboard header { display: flex; justify-content: space-between; height: 18px; }
.artboard h1 { margin: 0; font-size: 15px; line-height: 18px; }
.artboard small { font-size: 9px; }
.number { color: #999; font: 13px/20px "Liberation Serif", serif; }
.motto {
  display: flex;
  gap: 5px;
  font-size: 4px;
  line-height: 5px;
}
.motto > * { display: flex; margin: 0; writing-mode: vertical-rl; text-orientation: upright; }
.cube { position: absolute; left: 39px; top: 64px; width: 160px; height: 180px; }
.cube text { font-family: Lato, sans-serif; font-weight: bold; fill: #111; stroke: #111; stroke-width: 1px; }
.top-face { font-size: 18px; }
.side-face { font-size: 19px; }
.artboard footer {
  margin-top: auto;
  padding-right: 8px;
  font-size: 4px;
  font-weight: bold;
  line-height: 6px;
  text-align: center;
}

/* Scroll bars and status */
.vscroll {
  display: flex;
  flex-direction: column;
  align-items: center;
  width: 15px;
  padding: 3px 0;
  background: #4d4d4d;
}
.vscroll .thumb { width: 12px; height: 22px; border-radius: 6px; background: #656565; }
.vscroll .before { flex: 52; }
.vscroll .after { flex: 51; }
.status {
  display: flex;
  align-items: center;
  height: 14px;
  background: #505050;
  font-family: "Liberation Mono", "Noto Sans CJK SC", monospace;
  font-size: 9px;
}
.status .pick { height: 14px; margin: 0; }
.zoom { width: 60px; padding-left: 5px; }
.page { width: 49px; padding-left: 3px; }
.pager { display: flex; gap: 7px; padding: 0 6px 0 8px; }
.state { width: 167px; text-align: center; font-size: 10px; line-height: 14px; color: #bbb; }
.play { width: 14px; margin-right: 1px; }
.hscroll { flex: 1; display: flex; align-items: center; height: 14px; padding: 0 2px; background: #4a4a4a; }
.hscroll .thumb { width: 22px; height: 12px; border-radius: 6px; background: #656565; }
.hscroll .before { flex: 53; }
.hscroll .after { flex: 46; }
.corner { width: 15px; }

/* Docked panels */
.dock { width: 33px; border-left: 1px solid #3c3c3c; }
.dock + .dock { border-left-width: 2px; }
.dock-group {
  display: flex;
  flex-direction: column;
  align-items: center;
  padding-top: 3px;
  padding-bottom: 2px;
  border-bottom: 1px solid #3c3c3c;
}
.dock-group.first { padding-bottom: 3px; }
.dock-group button { width: 24px; height: 24px; }
.dock-group .wide svg { width: 18px; }

.taskbar {
  display: flex;
  height: 5px;
  padding: 0 52px 0 105px;
  overflow: hidden;
  background: #0a0606;
  color: #ddd;
  font-size: 8px;
  line-height: 10px;
}
.running { width: 34px; background: #353131; }
.taskbar time { margin-left: auto; }

.watermark {
  position: absolute;
  right: 36px;
  bottom: 31px;
  display: flex;
  align-items: center;
  gap: 3px;
  color: #f4f4f4;
  font: 27px/38px "Noto Sans CJK SC", sans-serif;
}
```
